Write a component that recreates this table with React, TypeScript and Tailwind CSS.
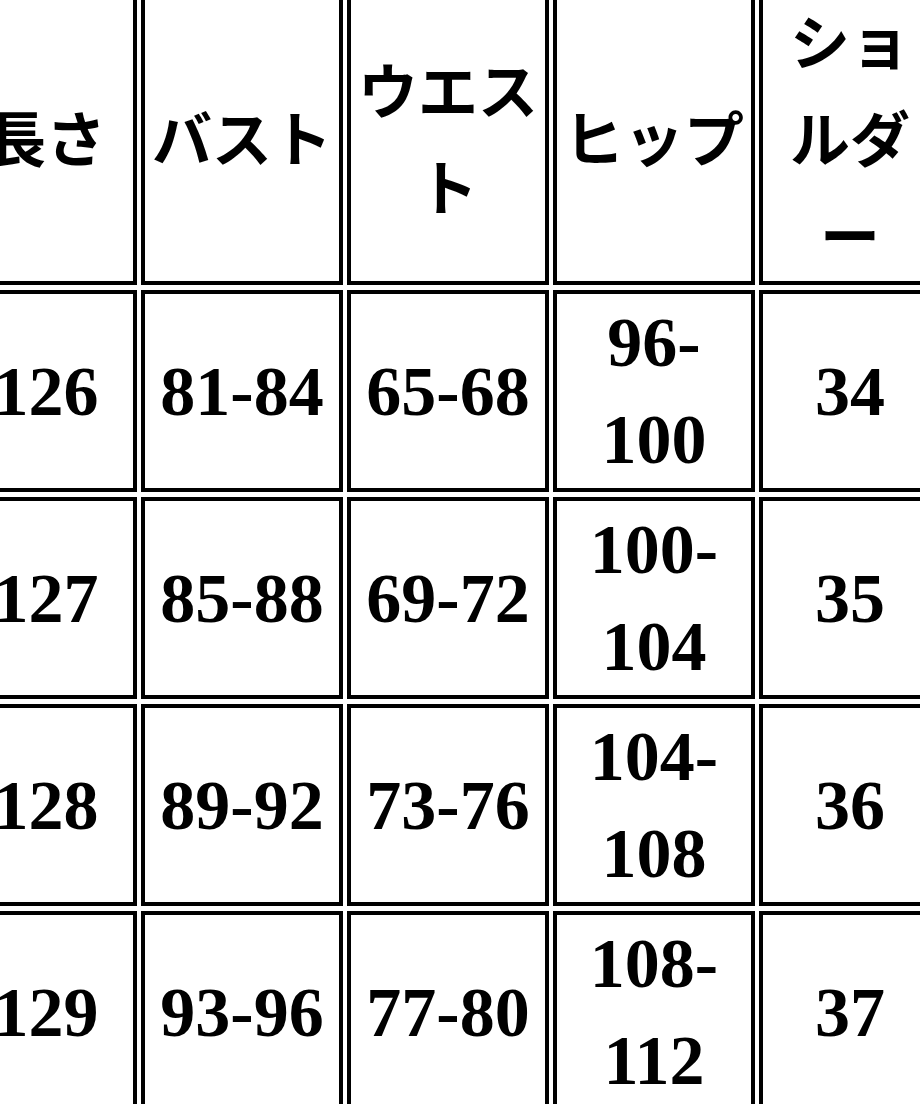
const headers: React.ReactNode[] = [
  "長さ",
  "バスト",
  <>
    ウエス
    <br />ト
  </>,
  "ヒップ",
  <>
    ショ
    <br />
    ルダ
    <br />ー
  </>,
];

const rows: [string, string, string, [string, string], string][] = [
  ["126", "81-84", "65-68", ["96-", "100"], "34"],
  ["127", "85-88", "69-72", ["100-", "104"], "35"],
  ["128", "89-92", "73-76", ["104-", "108"], "36"],
  ["129", "93-96", "77-80", ["108-", "112"], "37"],
];

const colWidths = ["w-[182px]", "w-[202px]", "w-[202px]", "w-[202px]", "w-[182px]"];

export default function App() {
  return (
    <div className="h-[1104px] w-[920px] overflow-hidden bg-white text-black">
      <table className="-ml-[49px] -mt-[19px] w-[994px] table-fixed border-separate border-spacing-x-[4px] border-spacing-y-[5px]">
        <thead>
          <tr>
            {headers.map((h, i) => (
              <th
                key={i}
                className={`${colWidths[i]} border-4 border-black p-0 text-center align-middle font-['Noto_Sans_CJK_JP',sans-serif] text-[60px] leading-[97px] font-bold`}
              >
                {h}
              </th>
            ))}
          </tr>
        </thead>
        <tbody className="font-['Liberation_Serif',serif] text-[70px] leading-[97px] font-bold">
          {rows.map((r) => (
            <tr key={r[0]}>
              <td className="border-4 border-black p-0 text-center align-middle">{r[0]}</td>
              <td className="border-4 border-black p-0 text-center align-middle">{r[1]}</td>
              <td className="border-4 border-black p-0 text-center align-middle">{r[2]}</td>
              <td className="border-4 border-black p-0 text-center align-middle">
                {r[3][0]}
                <br />
                {r[3][1]}
              </td>
              <td className="border-4 border-black p-0 text-center align-middle">{r[4]}</td>
            </tr>
          ))}
        </tbody>
      </table>
    </div>
  );
}
